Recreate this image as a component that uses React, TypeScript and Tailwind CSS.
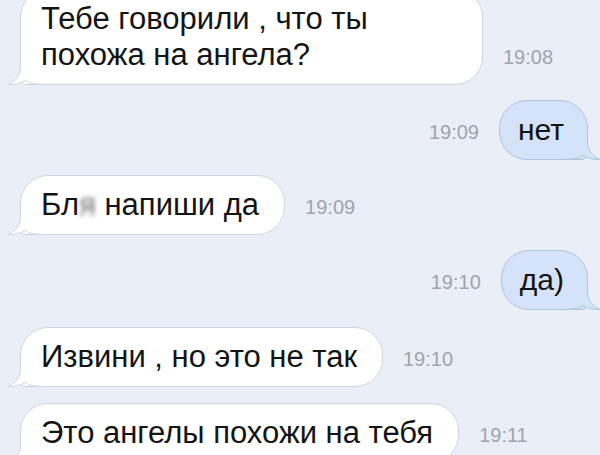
const FONT = "font-['Liberation_Sans','Helvetica','Arial',sans-serif]";

type Msg = {
  side: "in" | "out";
  time: string;
  gap: string;
  width?: string;
  lines: React.ReactNode[];
};

const messages: Msg[] = [
  { side: "in", time: "19:08", gap: "mt-[-11px]", width: "w-[463px]", lines: ["Тебе говорили , что ты", "похожа на ангела?"] },
  { side: "out", time: "19:09", gap: "mt-[15px]", lines: ["нет"] },
  {
    side: "in",
    time: "19:09",
    gap: "mt-[15px]",
    lines: [
      <>
        Бл<span className="blur-[2.5px] text-[#6f6f6f]">я</span> напиши да
      </>,
    ],
  },
  { side: "out", time: "19:10", gap: "mt-[15px]", lines: ["да)"] },
  { side: "in", time: "19:10", gap: "mt-[17px]", lines: ["Извини , но это не так"] },
  { side: "in", time: "19:11", gap: "mt-[16px]", lines: ["Это ангелы похожи на тебя"] },
];

function Tail({ out }: { out: boolean }) {
  const fill = out ? "#d4e3f7" : "#ffffff";
  const stroke = out ? "#b3c4da" : "#cfd5de";
  return (
    <svg
      width="40"
      height="30"
      viewBox="0 0 40 30"
      className={`absolute bottom-[-1px] ${out ? "right-[-14px] -scale-x-100" : "left-[-14px]"}`}
    >
      <path d="M13.5 0 L13.5 12 C13.5 20 9 26 1 29.5 C8 30 14 28 18 25.5 C22 28.5 28 29.5 40 29.5 L40 0 Z" fill={fill} />
      <path d="M13.5 0 L13.5 12 C13.5 20 9 26 1 29.5 C8 30 14 28 18 25.5 C22 28.5 28 29.5 40 29.5" fill="none" stroke={stroke} strokeWidth="1" />
    </svg>
  );
}

function Bubble({ msg }: { msg: Msg }) {
  const out = msg.side === "out";
  const time = <span className="mb-[17px] text-[20px] leading-[22px] text-[#a0a4ab]">{msg.time}</span>;
  const bubble = (
    <div
      className={`relative rounded-[28px] border py-[11px] leading-[36px] text-[#141414] ${
        out
          ? "rounded-br-[6px] border-[#b3c4da] bg-[#d4e3f7] pl-[18px] pr-[23px] text-[30px]"
          : "rounded-bl-[6px] border-[#cfd5de] bg-white pl-[20px] pr-[25px] text-[31px]"
      } ${msg.width ?? ""}`}
    >
      <Tail out={out} />
      {msg.lines.map((l, i) => (
        <div key={i} className="relative whitespace-nowrap">
          {l}
        </div>
      ))}
    </div>
  );

  return (
    <div className={`flex items-end gap-5 ${msg.gap} ${out ? "justify-end pr-[12px]" : "pl-[20px]"}`}>
      {out ? (
        <>
          {time}
          {bubble}
        </>
      ) : (
        <>
          {bubble}
          {time}
        </>
      )}
    </div>
  );
}

export default function App() {
  return (
    <div className={`h-[455px] w-[600px] overflow-hidden bg-[#eaeff7] ${FONT}`}>
      <div className="flex flex-col">
        {messages.map((m, i) => (
          <Bubble key={i} msg={m} />
        ))}
      </div>
    </div>
  );
}
